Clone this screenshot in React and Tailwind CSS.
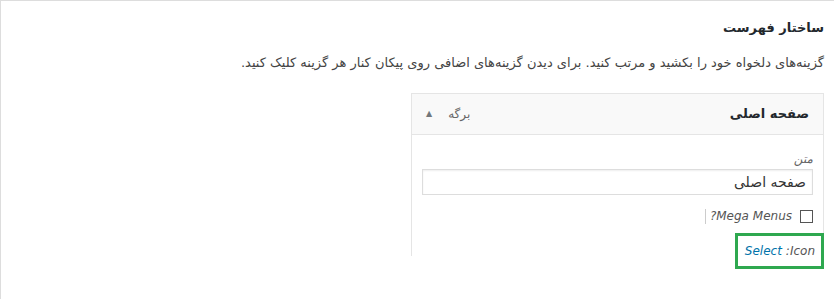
import React from "react";

const MenuStructure = () => {
  return (
    <div
      dir="rtl"
      className="w-[834px] h-[299px] bg-white border-t border-l border-[#dddddd] overflow-hidden"
      style={{ fontFamily: '"DejaVu Sans", "Liberation Sans", sans-serif' }}
    >
      <div className="pr-[10px] pt-[17px]">
        <h3 className="text-[13px] font-bold text-[#23282d] leading-[20px]">
          ساختار فهرست
        </h3>
        <p className="mt-[16px] text-[13px] text-[#444] leading-[18px]">
          گزینه‌های دلخواه خود را بکشید و مرتب کنید. برای دیدن گزینه‌های اضافی
          روی پیکان کنار هر گزینه کلیک کنید.
        </p>

        {/* menu item panel */}
        <div className="relative mt-[21px] w-[413px]">
          <div className="flex items-center justify-between h-[42px] bg-[#f9f9f9] border border-[#e5e5e5] pr-[14px] pl-[14px]">
            <span className="text-[13px] font-bold text-[#23282d]">صفحه اصلی</span>
            <div className="flex items-center gap-[16px] text-[12px] text-[#666]">
              <span>برگه</span>
              <span className="text-[8px] text-[#72777c]">▲</span>
            </div>
          </div>
          <div className="h-[121px] border-l border-r border-[#e5e5e5] px-[10px] pt-[16px]">
            <label className="block text-[12px] italic text-[#666] leading-[16px]">
              متن
            </label>
            <div className="mt-[2px] h-[26px] border border-[#dddddd] flex items-center px-[6px] text-[14px] text-[#333] shadow-[inset_0_1px_2px_rgba(0,0,0,0.07)]">
              صفحه اصلی
            </div>
            <div className="mt-[12px] flex items-center gap-[8px]">
              <span className="w-[13px] h-[13px] border border-[#555] bg-white" />
              <span className="text-[12px] italic text-[#555]">Mega Menus?</span>
              <span className="w-px h-[15px] bg-[#cccccc] -mr-[4px]" />
            </div>
          </div>
          <div className="absolute right-0 top-[140px] w-[89px] h-[36px] border-[3px] border-[#2ea84f] flex items-center px-[6px] text-[12px] italic">
            <span className="text-[#555]">Icon:</span>
            <span className="text-[#0073aa] mr-[4px]">Select</span>
          </div>
        </div>
      </div>
    </div>
  );
};

export default function App() {
  return <MenuStructure />;
}
